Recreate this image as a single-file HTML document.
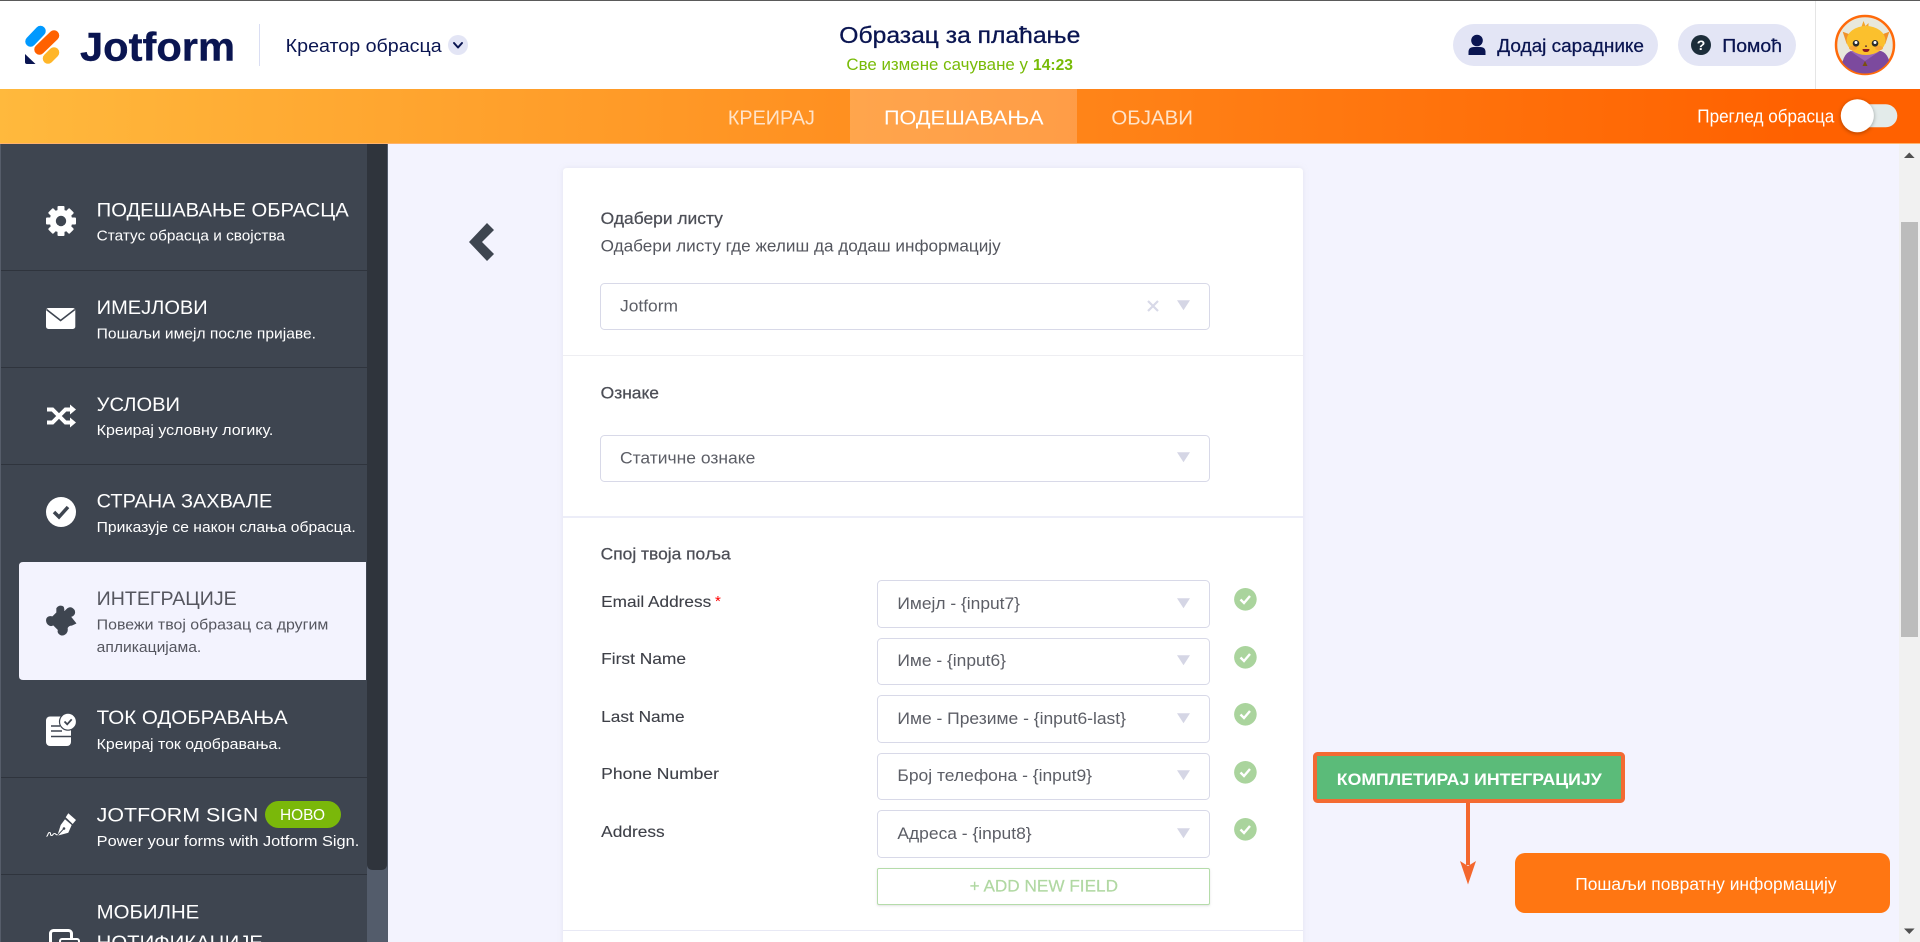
<!DOCTYPE html>
<html lang="sr">
<head>
<meta charset="utf-8">
<title>Jotform</title>
<style>
html,body{margin:0;padding:0;width:1920px;height:942px;overflow:hidden;background:#f3f3fe}
svg{display:block}
text{font-family:"Liberation Sans",sans-serif;white-space:pre}
.t{font-size:19px;fill:#fff}
.s{font-size:14.8px;fill:#fff}
.l{font-size:16.5px;fill:#54565e}
.lm{font-size:16.5px;fill:#4c4e56;stroke:#4c4e56;stroke-width:.25}
.v{font-size:16.8px;fill:#5c5e66}
.f{font-size:16px;fill:#3e4048;stroke:#3e4048;stroke-width:.12}
.n{font-size:20.5px;fill:#ffe3c8}
.b{font-size:18.5px;fill:#0a1551;stroke:#0a1551;stroke-width:.25}
</style>
</head>
<body>
<svg width="1920" height="942" viewBox="0 0 1920 942" xmlns="http://www.w3.org/2000/svg">
<defs>
<linearGradient id="nav" gradientUnits="userSpaceOnUse" x1="0" y1="89" x2="1800" y2="143">
<stop offset="0" stop-color="#ffb93d"/><stop offset="1" stop-color="#ff6100"/>
</linearGradient>
<filter id="cs" x="-5%" y="-5%" width="110%" height="110%"><feDropShadow dx="0" dy="0" stdDeviation="3" flood-color="#aab" flood-opacity=".22"/></filter>
<filter id="ks" x="-40%" y="-40%" width="180%" height="180%"><feDropShadow dx="0" dy="1" stdDeviation="2" flood-color="#000" flood-opacity=".35"/></filter>
<filter id="as" x="-5%" y="-20%" width="110%" height="150%"><feDropShadow dx="0" dy="1" stdDeviation="1" flood-color="#888" flood-opacity=".25"/></filter>
<clipPath id="av"><circle cx="1865" cy="45" r="28.5"/></clipPath>
</defs>

<!-- page -->
<rect width="1920" height="942" fill="#f3f3fe"/>

<!-- header -->
<rect width="1920" height="89" fill="#fff"/>
<rect width="1920" height="1" fill="#5a5a5a"/>

<!-- logo -->
<g fill="none" stroke-width="10.5" stroke-linecap="round">
<path d="M30.5 41.5L40.5 31" stroke="#0099ff"/>
<path d="M39.5 49.5L54 35.5" stroke="#ff6100"/>
<path d="M48 58.5L54 52.5" stroke="#ffb629"/>
</g>
<path d="M25 54L35.5 64H27Q25 64 25 62Z" fill="#0a1551"/>
<text x="80" y="60.5" font-size="40" font-weight="700" fill="#0a1551" stroke="#0a1551" stroke-width=".4" textLength="155" lengthAdjust="spacingAndGlyphs">Jotform</text>
<rect x="259" y="24" width="1" height="42" fill="#dadef3"/>
<text x="285.7" y="52" font-size="18.5" fill="#0a1551" textLength="156" lengthAdjust="spacingAndGlyphs">Креатор обрасца</text>
<circle cx="458" cy="45" r="10" fill="#e3e5f5"/>
<path d="M454 43l4 4.5 4-4.5" fill="none" stroke="#0a1551" stroke-width="2" stroke-linecap="round" stroke-linejoin="round"/>

<!-- title -->
<text x="839.3" y="43.2" font-size="23" fill="#0a1551" stroke="#0a1551" stroke-width=".3" textLength="241" lengthAdjust="spacingAndGlyphs">Образац за плаћање</text>
<text x="846.4" y="70" font-size="16.5" fill="#78bb07" textLength="181.6" lengthAdjust="spacingAndGlyphs">Све измене сачуване у</text>
<text x="1033" y="70" font-size="16" font-weight="700" fill="#78bb07" textLength="40" lengthAdjust="spacingAndGlyphs">14:23</text>

<!-- header right -->
<rect x="1453" y="24" width="205" height="42" rx="21" fill="#e3e5f5"/>
<circle cx="1477" cy="40.5" r="5.8" fill="#0a1551"/>
<path d="M1468.5 55v-3q0-5 5.500-5h6q5.500 0 5.500 5v3z" fill="#0a1551"/>
<text x="1497.300" y="52" class="b" textLength="146.700" lengthAdjust="spacingAndGlyphs">Додај сараднике</text>
<rect x="1678" y="24" width="118" height="42" rx="21" fill="#e3e5f5"/>
<circle cx="1701" cy="45" r="10" fill="#1c2d3a"/>
<text x="1701" y="50" font-size="14" font-weight="700" fill="#fff" text-anchor="middle">?</text>
<text x="1722.300" y="52" class="b" textLength="59.700" lengthAdjust="spacingAndGlyphs">Помоћ</text>
<rect x="1815" y="1" width="1" height="88" fill="#e5e5e5"/>

<!-- avatar -->
<circle cx="1865" cy="45" r="29" fill="#e8e8dc" stroke="#ff6a0a" stroke-width="2.500"/>
<g clip-path="url(#av)">
<path d="M1841 76q0-22 10-25h30q10 3 10 25z" fill="#7c4a9e"/>
<path d="M1850 51l15 10 15-10z" fill="#9a66b8"/>
<path d="M1865 61l-2.500 5h5z" fill="#7a5010"/>
</g>
<path d="M1842.700 31.700l9 3.300-5 9zM1889.300 31.700l-9 3.300 5 9z" fill="#f0912a"/>
<path d="M1861 28l2.500-7 2 5 3-3 0 5z" fill="#f4a52a"/>
<ellipse cx="1866" cy="40.500" rx="19.500" ry="14.500" fill="#fbc02d"/>
<ellipse cx="1853" cy="48" rx="4" ry="2.300" fill="#f9a63a"/>
<ellipse cx="1879" cy="48" rx="4" ry="2.300" fill="#f9a63a"/>
<circle cx="1856" cy="43.300" r="3.300" fill="#2b2b2b"/><circle cx="1875" cy="43.300" r="3.300" fill="#2b2b2b"/>
<circle cx="1856" cy="42.500" r="1.500" fill="#fff"/><circle cx="1875" cy="42.500" r="1.500" fill="#fff"/>
<rect x="1865" y="45.500" width="2" height="1.300" fill="#533"/>
<path d="M1862.500 49h7q0 3-3.500 3t-3.500-3z" fill="#8a1820"/>

<!-- nav -->
<rect y="89" width="1920" height="55" fill="url(#nav)"/>
<rect y="143" width="1920" height="1" fill="#ffb36b"/>
<rect x="850" y="89" width="227" height="54" fill="#fff" fill-opacity=".2"/>
<text x="727.900" y="124.300" class="n" textLength="87" lengthAdjust="spacingAndGlyphs">КРЕИРАЈ</text>
<text x="884" y="124.300" class="n" style="fill:#fff" textLength="159.600" lengthAdjust="spacingAndGlyphs">ПОДЕШАВАЊА</text>
<text x="1111.400" y="124.300" class="n" textLength="81.600" lengthAdjust="spacingAndGlyphs">ОБЈАВИ</text>
<text x="1697.300" y="122.700" font-size="18.5" fill="#fff" textLength="137" lengthAdjust="spacingAndGlyphs">Преглед обрасца</text>
<rect x="1846.700" y="104.300" width="50.600" height="23" rx="11.500" fill="#e3ebea"/>
<circle cx="1857.300" cy="115.700" r="16.500" fill="#fff" filter="url(#ks)"/>

<!-- sidebar -->
<rect y="144" width="367" height="798" fill="#3e4550"/>
<rect y="144" width="1" height="798" fill="#565d6a"/>
<g fill="#2f343d">
<rect x="1" y="270" width="366" height="1"/>
<rect x="1" y="367" width="366" height="1"/>
<rect x="1" y="464" width="366" height="1"/>
<rect x="1" y="777" width="366" height="1"/>
<rect x="1" y="874" width="366" height="1"/>
</g>
<rect x="367" y="144" width="21" height="798" fill="#535c6b"/>
<path d="M367 144h20v720q0 6-6 6h-8q-6 0-6-6z" fill="#2f343c"/>
<path d="M19 566q0-4 4-4h343v118H23q-4 0-4-4z" fill="#f3f3fe"/>

<!-- sidebar texts -->
<text x="96.700" y="216.300" class="t" textLength="252" lengthAdjust="spacingAndGlyphs">ПОДЕШАВАЊЕ ОБРАСЦА</text>
<text x="96.700" y="240.700" class="s" textLength="188.300" lengthAdjust="spacingAndGlyphs">Статус обрасца и својства</text>
<text x="96.700" y="314" class="t" textLength="111" lengthAdjust="spacingAndGlyphs">ИМЕЈЛОВИ</text>
<text x="96.700" y="338.300" class="s" textLength="219.300" lengthAdjust="spacingAndGlyphs">Пошаљи имејл после пријаве.</text>
<text x="96.700" y="411" class="t" textLength="83.300" lengthAdjust="spacingAndGlyphs">УСЛОВИ</text>
<text x="96.700" y="435" class="s" textLength="176.600" lengthAdjust="spacingAndGlyphs">Креирај условну логику.</text>
<text x="96.700" y="507.300" class="t" textLength="175.600" lengthAdjust="spacingAndGlyphs">СТРАНА ЗАХВАЛЕ</text>
<text x="96.700" y="532" class="s" textLength="259" lengthAdjust="spacingAndGlyphs">Приказује се након слања обрасца.</text>
<text x="96.700" y="605" class="t" style="fill:#55565f" textLength="140" lengthAdjust="spacingAndGlyphs">ИНТЕГРАЦИЈЕ</text>
<text x="96.700" y="629.300" class="s" style="fill:#55565f" textLength="231.600" lengthAdjust="spacingAndGlyphs">Повежи твој образац са другим</text>
<text x="96.700" y="652" class="s" style="fill:#55565f" textLength="104.600" lengthAdjust="spacingAndGlyphs">апликацијама.</text>
<text x="96.700" y="724" class="t" textLength="191" lengthAdjust="spacingAndGlyphs">ТОК ОДОБРАВАЊА</text>
<text x="96.700" y="749" class="s" textLength="185" lengthAdjust="spacingAndGlyphs">Креирај ток одобравања.</text>
<text x="96.700" y="821.700" class="t" textLength="161.600" lengthAdjust="spacingAndGlyphs">JOTFORM SIGN</text>
<rect x="265" y="801" width="76" height="27" rx="13.500" fill="#7ab80a"/>
<text x="280" y="820" font-size="15.500" fill="#fff" textLength="45" lengthAdjust="spacingAndGlyphs">НОВО</text>
<text x="96.700" y="846" class="s" textLength="262.600" lengthAdjust="spacingAndGlyphs">Power your forms with Jotform Sign.</text>
<text x="96.700" y="918.700" class="t" textLength="102.600" lengthAdjust="spacingAndGlyphs">МОБИЛНЕ</text>
<text x="96.700" y="949" class="t" textLength="166.300" lengthAdjust="spacingAndGlyphs">НОТИФИКАЦИЈЕ</text>

<!-- sidebar icons -->
<g fill="#fff">
<g transform="translate(61 221)">
<circle r="11.500"/>
<rect x="-3.500" y="-15" width="7" height="7" rx="1"/>
<rect x="-3.500" y="-15" width="7" height="7" rx="1" transform="rotate(45)"/>
<rect x="-3.500" y="-15" width="7" height="7" rx="1" transform="rotate(90)"/>
<rect x="-3.500" y="-15" width="7" height="7" rx="1" transform="rotate(135)"/>
<rect x="-3.500" y="-15" width="7" height="7" rx="1" transform="rotate(180)"/>
<rect x="-3.500" y="-15" width="7" height="7" rx="1" transform="rotate(225)"/>
<rect x="-3.500" y="-15" width="7" height="7" rx="1" transform="rotate(270)"/>
<rect x="-3.500" y="-15" width="7" height="7" rx="1" transform="rotate(315)"/>
<circle r="5.200" fill="#3e4550"/>
</g>
<rect x="46" y="308" width="29.300" height="21" rx="2.500"/>
<path d="M46.500 309.500L60.600 320.500 74.800 309.500" fill="none" stroke="#3e4550" stroke-width="1.600"/>
<path d="M47 409.500h5.500L65.500 422.500H71M47 422.500h5.500L65.500 409.500H71" fill="none" stroke="#fff" stroke-width="4"/>
<path d="M70 404.500l6 5-6 5zM70 417.500l6 5-6 5z"/>
<circle cx="61" cy="512" r="15"/>
</g>
<path d="M54 512l5 5 9-10" fill="none" stroke="#3e4550" stroke-width="3.500"/>
<path transform="translate(40 600) scale(.3333)" d="M50 25Q55 18 62 18Q72 18 72 28L72 36L80 28Q88 20 96 24Q106 30 104 40Q102 48 92 50L108 70L95 76Q86 76 82 84Q84 96 76 102Q66 110 56 100Q52 94 55 90L40 75Q32 80 25 74Q17 66 20 56Q24 47 38 50L50 38Z" fill="#3e4550" stroke="#3e4550" stroke-width="2" stroke-linejoin="round"/>
<rect x="46" y="716.500" width="25" height="29.500" rx="4" fill="#fff"/>
<path d="M51 726h9M51 731h11M51 736.500h20" stroke="#3e4550" stroke-width="1.500"/>
<circle cx="68" cy="721.700" r="8.500" fill="#fff" stroke="#3e4550" stroke-width="1.200"/>
<path d="M64.500 721.500l2.700 2.800 4.500-5" fill="none" stroke="#3e4550" stroke-width="1.800"/>
<path d="M68.300 813.300L76 820 72.700 824 65.700 817.300ZM65 819.300L71.700 825 68.300 832.700 57.300 835.700 60.700 825Z" fill="#fff"/>
<path d="M57.300 835.700L63.500 829" stroke="#3e4550" stroke-width="1"/>
<circle cx="64" cy="828.500" r="1.300" fill="#3e4550"/>
<path d="M46.500 836.500c2-1 1-4 3-4s0 3 2 3 1-2 3-2 1 2 3 1" fill="none" stroke="#fff" stroke-width="1.100"/>
<rect x="50.500" y="930.500" width="21" height="30" rx="3" fill="none" stroke="#fff" stroke-width="3"/>
<rect x="60" y="939" width="19" height="12" rx="2" fill="#3e4550" stroke="#fff" stroke-width="2"/>

<!-- back chevron -->
<path d="M469 242l18-19 7 7-12 12 12 12-7 7z" fill="#3e4550"/>

<!-- card -->
<path d="M563 172q0-4 4-4h732q4 0 4 4v775H563z" fill="#fff" filter="url(#cs)"/>
<rect x="563" y="355" width="740" height="1" fill="#eeeef2"/>
<rect x="563" y="516" width="740" height="2" fill="#ecedf8"/>
<rect x="563" y="930" width="740" height="1" fill="#e8e9f5"/>

<text x="600.700" y="224" class="lm" textLength="122.200" lengthAdjust="spacingAndGlyphs">Одабери листу</text>
<text x="600.700" y="251.700" class="l" textLength="400" lengthAdjust="spacingAndGlyphs">Одабери листу где желиш да додаш информацију</text>

<rect x="600.500" y="283.500" width="609" height="46" rx="4" fill="#fff" stroke="#d8d9e8"/>
<text x="620" y="311.700" class="v" textLength="58" lengthAdjust="spacingAndGlyphs">Jotform</text>
<path d="M1148 301l10 10M1158 301l-10 10" stroke="#d8d9e8" stroke-width="2.200"/>
<path d="M1177 300.300h13l-6.500 10z" fill="#d5d6e5"/>

<text x="600.700" y="398.300" class="lm" textLength="58.300" lengthAdjust="spacingAndGlyphs">Ознаке</text>
<rect x="600.500" y="435.500" width="609" height="46" rx="4" fill="#fff" stroke="#d8d9e8"/>
<text x="620" y="463.700" class="v" textLength="135.300" lengthAdjust="spacingAndGlyphs">Статичне ознаке</text>
<path d="M1177 452.300h13l-6.500 10z" fill="#d5d6e5"/>

<text x="600.700" y="559.300" class="lm" textLength="130" lengthAdjust="spacingAndGlyphs">Спој твоја поља</text>

<!-- rows -->
<text x="601.200" y="607.200" class="f" textLength="110" lengthAdjust="spacingAndGlyphs">Email Address</text>
<text x="715" y="606" font-size="15" fill="#f00">*</text>
<text x="601.200" y="664" class="f" textLength="84.800" lengthAdjust="spacingAndGlyphs">First Name</text>
<text x="601.200" y="722" class="f" textLength="83.400" lengthAdjust="spacingAndGlyphs">Last Name</text>
<text x="601.200" y="779" class="f" textLength="117.800" lengthAdjust="spacingAndGlyphs">Phone Number</text>
<text x="601.200" y="837" class="f" textLength="63.500" lengthAdjust="spacingAndGlyphs">Address</text>

<g fill="#fff" stroke="#d8d9e8">
<rect x="877.500" y="580.500" width="332" height="47" rx="4"/>
<rect x="877.500" y="638.500" width="332" height="46" rx="4"/>
<rect x="877.500" y="695.500" width="332" height="47" rx="4"/>
<rect x="877.500" y="753.500" width="332" height="46" rx="4"/>
<rect x="877.500" y="810.500" width="332" height="47" rx="4"/>
</g>
<text x="879.400" y="609" class="v" dx="18" textLength="122.600" lengthAdjust="spacingAndGlyphs">Имејл - {input7}</text>
<text x="897.400" y="666.200" class="v" textLength="108.600" lengthAdjust="spacingAndGlyphs">Име - {input6}</text>
<text x="897.400" y="724.200" class="v" textLength="228.600" lengthAdjust="spacingAndGlyphs">Име - Презиме - {input6-last}</text>
<text x="897.400" y="781.200" class="v" textLength="194.600" lengthAdjust="spacingAndGlyphs">Број телефона - {input9}</text>
<text x="897.400" y="839.200" class="v" textLength="134.200" lengthAdjust="spacingAndGlyphs">Адреса - {input8}</text>
<g fill="#d5d6e5">
<path d="M1177 598.300h13l-6.500 10z"/>
<path d="M1177 655.300h13l-6.500 10z"/>
<path d="M1177 713.300h13l-6.500 10z"/>
<path d="M1177 770.300h13l-6.500 10z"/>
<path d="M1177 828.300h13l-6.500 10z"/>
</g>
<g fill="#aad49d">
<circle cx="1245.400" cy="599.300" r="11.300"/>
<circle cx="1245.400" cy="657.300" r="11.300"/>
<circle cx="1245.400" cy="714.300" r="11.300"/>
<circle cx="1245.400" cy="772.300" r="11.300"/>
<circle cx="1245.400" cy="829.300" r="11.300"/>
</g>
<g fill="none" stroke="#fff" stroke-width="2.400">
<path d="M1240.500 599.500l3.500 3.500 6-7"/>
<path d="M1240.500 657.500l3.500 3.500 6-7"/>
<path d="M1240.500 714.500l3.500 3.500 6-7"/>
<path d="M1240.500 772.500l3.500 3.500 6-7"/>
<path d="M1240.500 829.500l3.500 3.500 6-7"/>
</g>
<rect x="877.500" y="868.500" width="332" height="36" rx="1.500" fill="#fff" stroke="#b5dcaa" filter="url(#as)"/>
<text x="969.600" y="891.300" font-size="16.500" fill="#b0d8a2" stroke="#b0d8a2" stroke-width=".2" textLength="148.400" lengthAdjust="spacingAndGlyphs">+ ADD NEW FIELD</text>

<!-- callout -->
<rect x="1315" y="754" width="308" height="47" rx="2.500" fill="#5bbb79" stroke="#f36a32" stroke-width="4"/>
<text x="1336.800" y="785" font-size="17" font-weight="700" fill="#fff" textLength="264.900" lengthAdjust="spacingAndGlyphs">КОМПЛЕТИРАЈ ИНТЕГРАЦИЈУ</text>
<rect x="1466" y="803" width="4" height="62" fill="#f3672e"/>
<path d="M1460 861l8 5 8-5-8 23.500z" fill="#f3672e"/>

<!-- feedback -->
<rect x="1515" y="853" width="375" height="60" rx="10" fill="#ff7612"/>
<text x="1575.200" y="890" font-size="17.500" fill="#fff" textLength="261.400" lengthAdjust="spacingAndGlyphs">Пошаљи повратну информацију</text>

<!-- page scrollbar -->
<rect x="1899" y="144" width="21" height="798" fill="#f1f1f1"/>
<rect x="1901" y="222" width="17" height="415" fill="#bcbcbc"/>
<path d="M1904 158l5.300-5.500 5.300 5.500z" fill="#505050"/>
<path d="M1904 928.500l5.300 5.500 5.300-5.500z" fill="#505050"/>
</svg>
</body>
</html>
